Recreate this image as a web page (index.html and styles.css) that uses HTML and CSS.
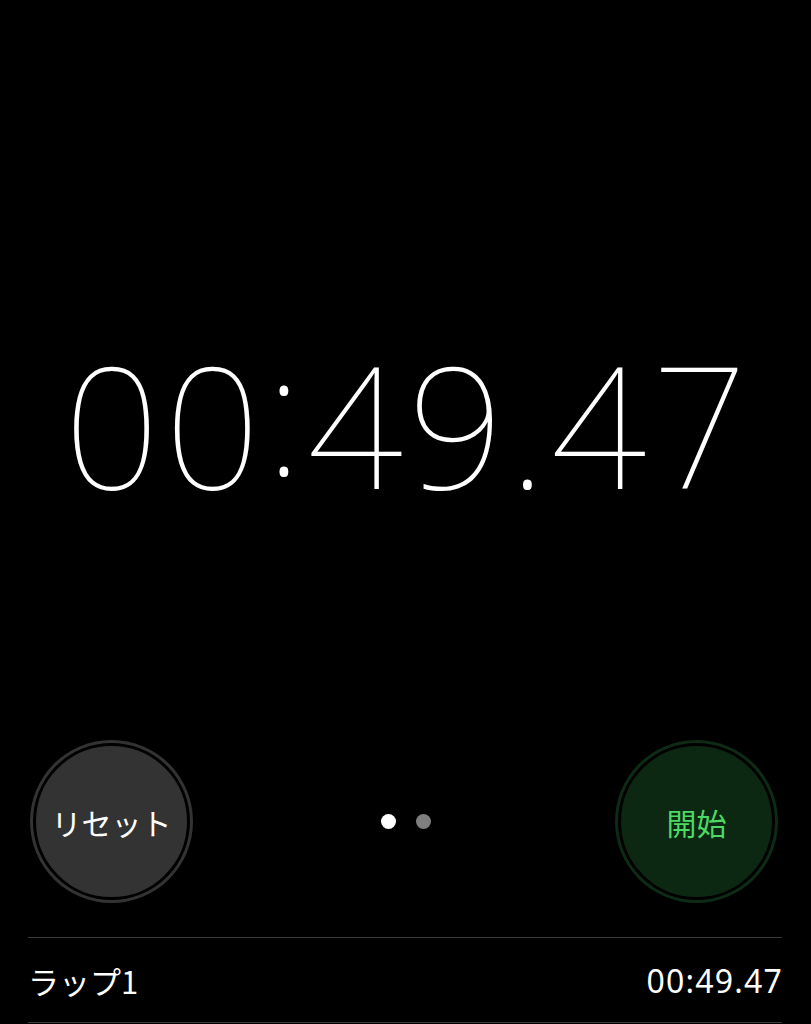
FILE: index.html
```html
<!DOCTYPE html>
<html lang="ja">
<head>
<meta charset="utf-8">
<title>ストップウォッチ</title>
<link rel="stylesheet" href="styles.css">
</head>
<body>
<main class="screen">
  <section class="display">
    <div class="time">00<span class="colon">:</span>49.47</div>
  </section>
  <section class="controls">
    <button class="btn btn-reset"><span class="btn-inner">リセット</span></button>
    <div class="pager">
      <span class="dot dot-active"></span>
      <span class="dot"></span>
    </div>
    <button class="btn btn-start"><span class="btn-inner">開始</span></button>
  </section>
  <ul class="laps">
    <li class="lap">
      <span class="lap-name">ラップ1</span>
      <span class="lap-time">00:49.47</span>
    </li>
  </ul>
</main>
</body>
</html>
```
FILE: styles.css
```css
html, body {
  margin: 0;
  padding: 0;
  background: #000;
}
.screen {
  width: 811px;
  height: 1024px;
  overflow: hidden;
  background: #000;
  color: #fff;
  font-family: "Noto Sans", "Noto Sans CJK JP", sans-serif;
  display: flex;
  flex-direction: column;
}
.display {
  height: 740px;
  display: flex;
  align-items: center;
  justify-content: center;
}
.time {
  font-family: "Noto Sans", sans-serif;
  font-weight: 100;
  font-size: 168px;
  line-height: 1;
  font-variant-numeric: tabular-nums;
  letter-spacing: 5px;
  color: #fff;
  margin-top: 96px;
  margin-left: 5px;
  white-space: nowrap;
}
.colon {
  vertical-align: 0.08em;
}
.controls {
  height: 163px;
  padding: 0 33px 0 30px;
  display: flex;
  align-items: center;
  justify-content: space-between;
}
.btn {
  width: 163px;
  height: 163px;
  border-radius: 50%;
  padding: 3px;
  border: 0;
  margin: 0;
  display: flex;
  box-sizing: border-box;
  font-family: "Noto Sans CJK JP", sans-serif;
  font-size: 30px;
  font-weight: 400;
}
.btn-inner {
  flex: 1;
  border-radius: 50%;
  border: 3px solid #000;
  display: flex;
  align-items: center;
  justify-content: center;
}
.btn-reset {
  background: #333333;
}
.btn-reset .btn-inner {
  background: #333333;
  color: #fff;
}
.btn-start {
  background: #0e2b15;
}
.btn-start .btn-inner {
  background: #0c2812;
  color: #4cd964;
}
.pager {
  display: flex;
  gap: 20px;
  align-items: center;
  margin-left: 4px;
}
.dot {
  width: 15px;
  height: 15px;
  border-radius: 50%;
  background: #7f7f7f;
}
.dot-active {
  background: #fff;
}
.laps {
  list-style: none;
  margin: 34px 29px 0 28px;
  padding: 0;
  border-top: 1px solid #3a3a3a;
}
.lap {
  height: 84px;
  display: flex;
  align-items: center;
  justify-content: space-between;
  border-bottom: 1px solid #3a3a3a;
  font-size: 31px;
}
.lap-name {
  font-family: "Noto Sans CJK JP", sans-serif;
  margin-left: 0;
}
.lap-time {
  font-family: "Noto Sans", sans-serif;
  font-size: 32px;
  font-weight: 400;
  letter-spacing: 1.2px;
  margin-right: -1px;
  font-variant-numeric: tabular-nums;
}
```
